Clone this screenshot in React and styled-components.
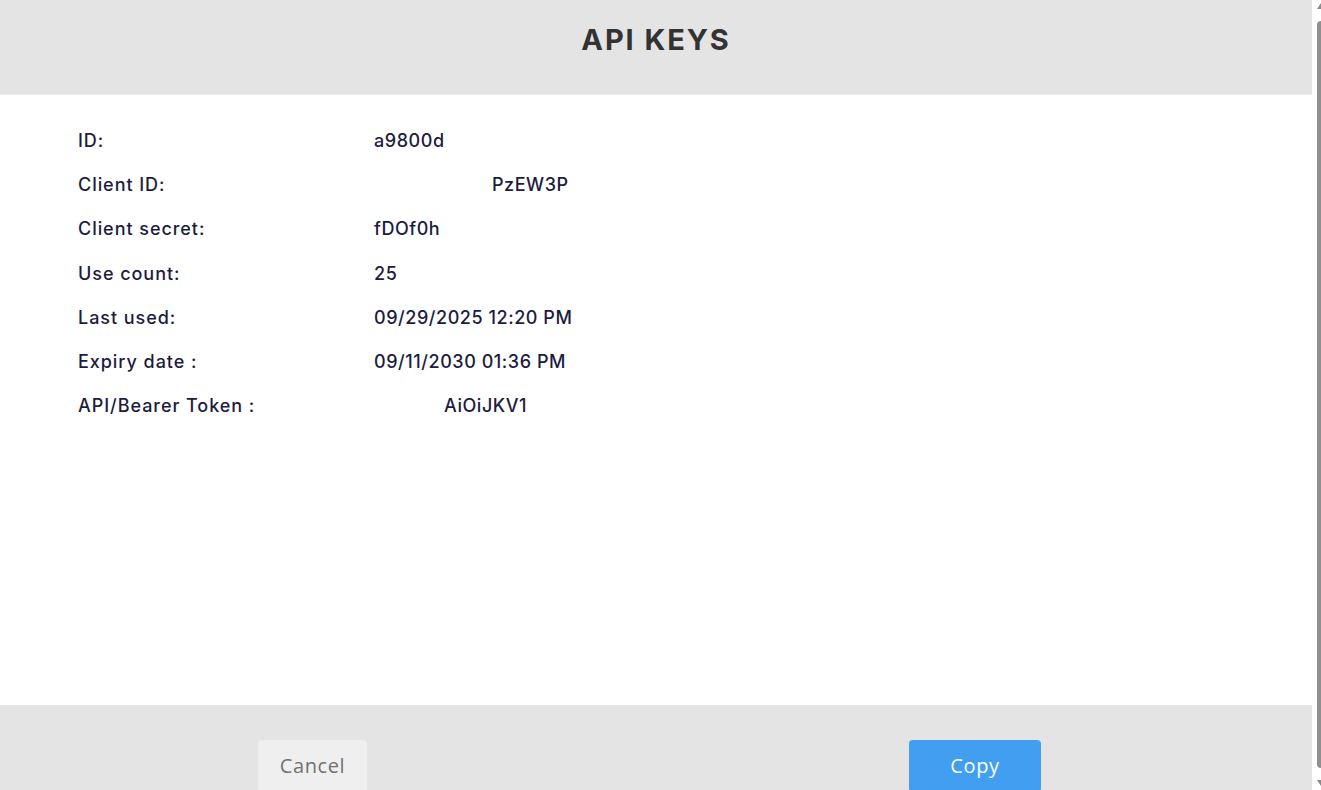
import React from "react";
import styled, { createGlobalStyle } from "styled-components";

const GlobalStyle = createGlobalStyle`
  html, body {
    margin: 0;
    padding: 0;
    background: #ffffff;
    overflow: hidden;
  }
  * {
    box-sizing: border-box;
  }
`;

const Page = styled.div`
  display: flex;
  width: 1321px;
  height: 790px;
  overflow: hidden;
`;

const Dialog = styled.div`
  width: 1312px;
  display: flex;
  flex-direction: column;
  background: #ffffff;
`;

const Header = styled.div`
  height: 95px;
  flex-shrink: 0;
  background: #e4e4e4;
  border-bottom: 1px solid #ededed;
  display: flex;
  justify-content: center;
  padding-top: 21px;
`;

const Title = styled.h1`
  margin: 0;
  font-family: "Inter", "Liberation Sans", sans-serif;
  font-weight: 700;
  font-size: 29px;
  line-height: 38px;
  letter-spacing: 1.9px;
  color: #333333;
`;

const Body = styled.div`
  flex: 1;
  padding: 23px 0 0 78px;
  display: flex;
  flex-direction: column;
`;

const Row = styled.div`
  display: grid;
  grid-template-columns: 296px 1fr;
  height: 44.3px;
  align-items: center;
  font-family: "Inter", "Liberation Sans", sans-serif;
  font-weight: 500;
  font-size: 18px;
  letter-spacing: 0.7px;
  color: #1c1c40;
`;

const Label = styled.span`
  letter-spacing: 0.95px;
`;

const Value = styled.span`
  padding-left: ${(p) => p.$offset || 0}px;
  letter-spacing: 0.55px;
`;

const Footer = styled.div`
  height: 85px;
  flex-shrink: 0;
  background: #e4e4e4;
  display: flex;
  justify-content: space-between;
  align-items: flex-start;
  padding: 35px 271px 0 258px;
`;

const Button = styled.button`
  height: 52px;
  border: none;
  border-radius: 4px;
  font-family: "Open Sans", "Liberation Sans", sans-serif;
  font-size: 20px;
  letter-spacing: 0.6px;
  font-weight: 400;
  cursor: pointer;
  width: ${(p) => (p.$primary ? "132px" : "109px")};
  background: ${(p) => (p.$primary ? "#429ef0" : "#efefef")};
  color: ${(p) => (p.$primary ? "#ffffff" : "#727272")};
  padding: 0 0 2px;
`;

const Gutter = styled.div`
  flex: 1;
  display: flex;
  flex-direction: column;
  align-items: flex-end;
  padding: 3px 0 4px;
  background: #ffffff;
`;

const Arrow = styled.div`
  width: 0;
  height: 0;
  border-left: 4px solid transparent;
  border-right: 0 solid transparent;
  ${(p) =>
    p.$down
      ? "border-top: 6px solid #8a8a8a;"
      : "border-bottom: 6px solid #8a8a8a;"}
`;

const Thumb = styled.div`
  flex: 1;
  width: 4px;
  margin: 12px 0;
  background: #8f8f8f;
  border-radius: 4px 0 0 4px;
`;

const rows = [
  { label: "ID:", value: "a9800d" },
  { label: "Client ID:", value: "PzEW3P", offset: 118 },
  { label: "Client secret:", value: "fDOf0h" },
  { label: "Use count:", value: "25" },
  { label: "Last used:", value: "09/29/2025 12:20 PM" },
  { label: "Expiry date :", value: "09/11/2030 01:36 PM" },
  { label: "API/Bearer Token :", value: "AiOiJKV1", offset: 70 },
];

export default function App() {
  return (
    <>
      <GlobalStyle />
      <Page>
        <Dialog>
          <Header>
            <Title>API KEYS</Title>
          </Header>
          <Body>
            {rows.map((r) => (
              <Row key={r.label}>
                <Label>{r.label}</Label>
                <Value $offset={r.offset}>{r.value}</Value>
              </Row>
            ))}
          </Body>
          <Footer>
            <Button>Cancel</Button>
            <Button $primary>Copy</Button>
          </Footer>
        </Dialog>
        <Gutter>
          <Arrow />
          <Thumb />
          <Arrow $down />
        </Gutter>
      </Page>
    </>
  );
}
